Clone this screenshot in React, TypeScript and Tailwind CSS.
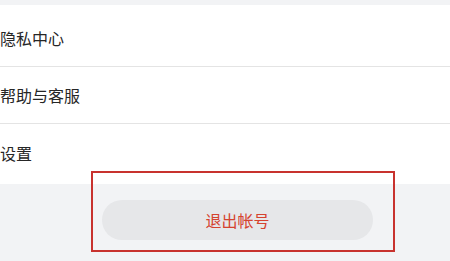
const rows = ["隐私中心", "帮助与客服", "设置"];

export default function App() {
  return (
    <div
      className="relative h-[261px] w-[450px] overflow-hidden bg-[#f2f3f5]"
      style={{ fontFamily: '"Noto Sans CJK SC", "Noto Sans", sans-serif' }}
    >
      <div className="h-[5px]" />
      <div className="bg-white pt-[5px] pb-[3px]">
        {rows.map((label, i) => (
          <div
            key={label}
            className={
              "flex h-[57px] items-center text-[16px] text-[#262626] " +
              (i < rows.length - 1 ? "border-b border-[#e4e4e4]" : "")
            }
          >
            {label}
          </div>
        ))}
      </div>
      <div className="pt-[16px] pl-[102px]">
        <button
          type="button"
          className="flex h-[40px] w-[271px] items-center justify-center rounded-full bg-[#e6e7e9] text-[16px] text-[#d5432f]"
        >
          退出帐号
        </button>
      </div>
      <div className="pointer-events-none absolute left-[91px] top-[171px] h-[81px] w-[304px] border-2 border-[#c8322e]" />
    </div>
  );
}
